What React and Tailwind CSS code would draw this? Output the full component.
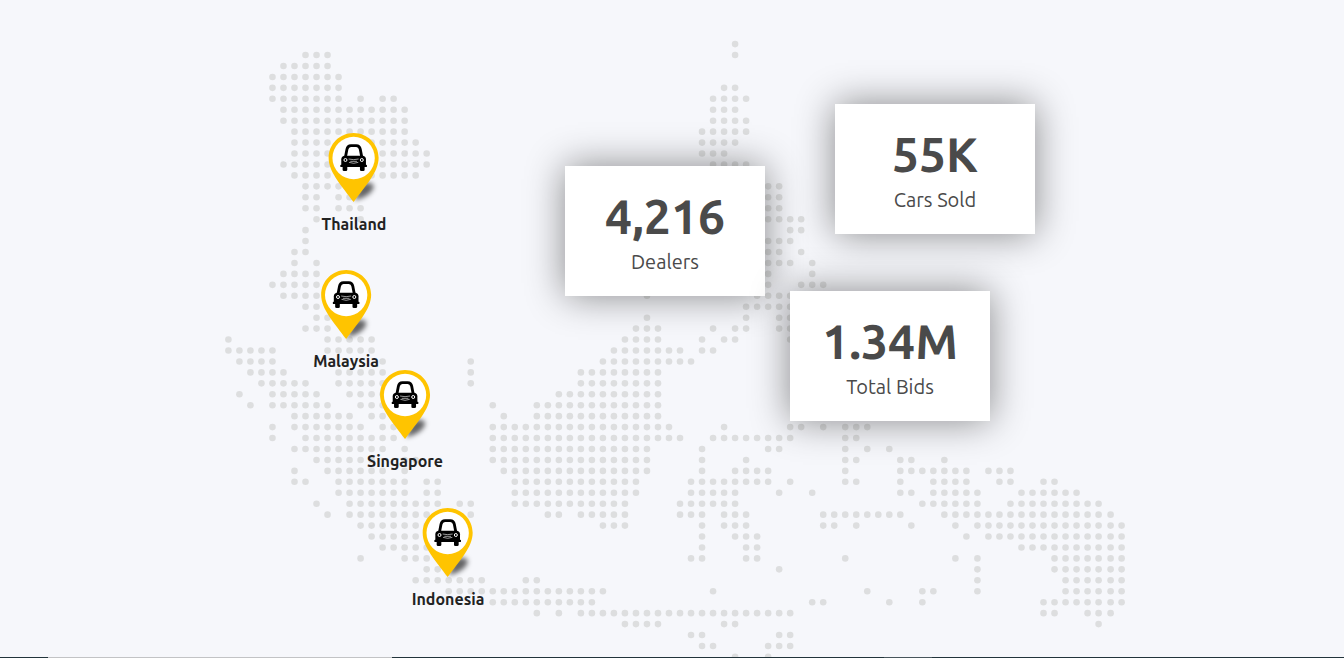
import React from "react";

const MAP = { left: 160, width: 1024, height: 657 };

// Dots of the map, one entry per grid row; every pair is a run of columns.
const ROWS = [
  [[46, 46]],
  [[7, 9], [46, 46]],
  [[5, 9]],
  [[4, 10]],
  [[4, 10], [45, 46]],
  [[4, 10], [12, 12], [14, 15], [44, 47]],
  [[5, 16], [44, 46]],
  [[5, 16], [44, 47]],
  [[6, 16], [43, 47]],
  [[6, 17], [43, 46]],
  [[6, 18], [43, 45]],
  [[5, 18], [44, 47]],
  [[6, 17]],
  [[7, 11], [49, 50]],
  [[7, 8], [10, 11], [49, 50]],
  [[7, 8], [10, 12], [49, 50]],
  [[8, 8], [12, 12], [49, 52]],
  [[7, 7], [51, 52]],
  [[7, 7], [49, 51]],
  [[6, 7], [49, 50], [52, 52]],
  [[6, 6], [8, 8], [49, 51], [53, 53]],
  [[5, 8], [49, 49], [53, 53]],
  [[4, 8], [49, 49], [52, 54]],
  [[5, 8], [38, 38], [48, 51]],
  [[7, 8], [47, 51]],
  [[8, 9], [38, 38], [47, 47], [50, 51]],
  [[7, 9], [37, 39], [44, 44], [46, 47], [50, 51]],
  [[0, 0], [9, 13], [36, 39], [43, 43], [45, 46], [51, 51]],
  [[0, 4], [9, 13], [35, 41], [43, 44]],
  [[1, 4], [14, 14], [22, 22], [34, 42]],
  [[2, 5], [10, 14], [22, 22], [32, 39]],
  [[3, 7], [10, 14], [22, 22], [32, 39]],
  [[1, 1], [4, 8], [11, 14], [30, 39]],
  [[2, 2], [4, 9], [12, 14], [24, 24], [28, 39]],
  [[6, 11], [13, 14], [25, 25], [28, 39]],
  [[4, 4], [6, 12], [14, 15], [24, 40], [45, 45], [51, 52], [54, 54], [56, 58]],
  [[4, 4], [7, 15], [24, 41], [44, 51], [56, 57]],
  [[6, 14], [16, 16], [24, 38], [43, 43], [49, 50], [56, 56], [58, 58], [60, 60]],
  [[8, 13], [16, 17], [24, 38], [43, 43], [47, 47], [56, 57], [61, 62], [65, 65]],
  [[6, 6], [9, 14], [16, 16], [25, 38], [43, 43], [46, 49], [56, 56], [61, 67], [69, 71]],
  [[6, 7], [10, 16], [18, 19], [26, 37], [42, 49], [51, 51], [56, 57], [61, 61], [64, 67], [70, 71], [74, 75]],
  [[10, 16], [18, 19], [26, 37], [42, 46], [50, 50], [53, 53], [61, 62], [64, 68], [72, 77]],
  [[8, 8], [11, 19], [21, 22], [26, 36], [41, 46], [63, 68], [71, 79]],
  [[9, 9], [11, 19], [22, 22], [29, 30], [32, 36], [41, 43], [45, 47], [54, 61], [65, 80]],
  [[12, 18], [34, 36], [43, 43], [45, 47], [54, 55], [57, 57], [62, 62], [66, 66], [68, 81]],
  [[13, 18], [43, 43], [46, 48], [67, 67], [69, 81]],
  [[14, 18], [43, 43], [47, 48], [72, 81]],
  [[12, 12], [16, 18], [42, 43], [47, 48], [56, 56], [66, 66], [68, 68], [75, 81]],
  [[18, 19], [50, 50], [68, 68], [75, 81]],
  [[17, 23], [27, 28], [68, 68], [76, 81]],
  [[20, 34], [44, 44], [58, 58], [63, 64], [68, 68], [76, 81]],
  [[24, 33], [53, 54], [60, 60], [63, 63], [74, 81]],
  [[28, 28], [30, 30], [32, 51], [74, 75], [78, 80]],
  [[36, 39], [45, 46], [79, 79]],
  [[42, 43], [50, 51]],
  [[43, 44], [49, 51]],
  [[46, 46], [49, 49]],
];

const DOTS = ROWS.flatMap((runs, row) =>
  runs.flatMap(([from, to]) =>
    Array.from({ length: to - from + 1 }, (_, i) => {
      const col = from + i;
      return { id: `${row}-${col}`, x: 228.4 + col * 11.015 + (col > 79 ? 1 : 0), y: 44.1 + row * 10.943 };
    })
  )
);

const PLACES = [
  { name: "Thailand", x: 354, y: 132 },
  { name: "Malaysia", x: 346, y: 269 },
  { name: "Singapore", x: 405, y: 369 },
  { name: "Indonesia", x: 448, y: 507 },
];

const STATS = [
  { value: "4,216", label: "Dealers", x: 565, y: 166 },
  { value: "55K", label: "Cars Sold", x: 835, y: 104 },
  { value: "1.34M", label: "Total Bids", x: 790, y: 291 },
];

const place = ({ x, y }) => ({
  left: `${((x - MAP.left) / MAP.width) * 100}%`,
  top: `${(y / MAP.height) * 100}%`,
});

function DotMap() {
  return (
    <svg viewBox="160 0 1024 657" className="block w-full fill-[#dddedf]" aria-hidden="true">
      {DOTS.map((d) => (
        <circle key={d.id} cx={d.x} cy={d.y} r="3.3" />
      ))}
    </svg>
  );
}

function Pin() {
  return (
    <svg viewBox="18 21 168 213" className="h-[71px] w-14 overflow-visible" aria-hidden="true">
      <defs>
        <filter id="pin-shadow" x="-50%" y="-50%" width="200%" height="200%">
          <feGaussianBlur stdDeviation="8" />
        </filter>
      </defs>
      <path
        d="M104 226 L122 182 C138 170 160 170 162 184 C162 202 132 222 104 226Z"
        fill="#000"
        fillOpacity="0.6"
        filter="url(#pin-shadow)"
      />
      <path
        d="M102 24 C61 24 27 57 27 98 C27 142 68 184 102 231 C136 184 177 142 177 98 C177 57 143 24 102 24Z"
        fill="#ffc400"
      />
      <circle cx="102" cy="99" r="63.5" fill="#fff" />
      <path
        d="M78 94 L82 73 Q84 62 94 62 H110 Q120 62 122 73 L126 94"
        fill="none"
        stroke="#000"
        strokeWidth="8.5"
      />
      <path d="M74 92 H130 Q139 94 139 103 V120 H65 V103 Q65 94 74 92Z" fill="#000" />
      <rect x="62" y="119" width="80" height="7" rx="2.5" fill="#000" />
      <rect x="69" y="120" width="14" height="18" rx="4" fill="#000" />
      <rect x="121" y="120" width="14" height="18" rx="4" fill="#000" />
      <g fill="none" stroke="#fff">
        <circle cx="77.5" cy="105" r="4.5" strokeWidth="3" />
        <circle cx="126.5" cy="105" r="4.5" strokeWidth="3" />
        <path d="M87 102 Q102 106 117 102 M92 109 H112 M88 112 Q102 118 116 112" strokeWidth="1.8" />
      </g>
    </svg>
  );
}

function Marker({ item }) {
  return (
    <li className="absolute flex -translate-x-1/2 flex-col items-center" style={place(item)}>
      <Pin />
      <span className="mt-[11px] text-base leading-5 font-bold text-[#222]">{item.name}</span>
    </li>
  );
}

function StatCard({ item }) {
  return (
    <div
      className="absolute flex w-[200px] flex-col items-center bg-white px-4 py-[19px] text-[#4a4a4a] shadow-[0_0_36px_rgba(0,0,0,0.45)]"
      style={place(item)}
    >
      <dd className="order-1 text-5xl leading-[62px] font-bold">{item.value}</dd>
      <dt className="order-2 text-xl leading-[30px]">{item.label}</dt>
    </div>
  );
}

export default function App() {
  return (
    <main className="overflow-hidden bg-[#f6f7fb] font-['Ubuntu','Noto_Sans',sans-serif]">
      <section className="relative mx-auto max-w-5xl">
        <DotMap />
        <ul>
          {PLACES.map((item) => (
            <Marker key={item.name} item={item} />
          ))}
        </ul>
        <dl>
          {STATS.map((item) => (
            <StatCard key={item.label} item={item} />
          ))}
        </dl>
      </section>
      <div className="relative flex h-px bg-[#22343b]">
        <div className="ml-12 w-[344px] bg-[#c2c3c5]" />
        <div className="ml-[492px] w-12 bg-[#48565c]" />
      </div>
    </main>
  );
}
